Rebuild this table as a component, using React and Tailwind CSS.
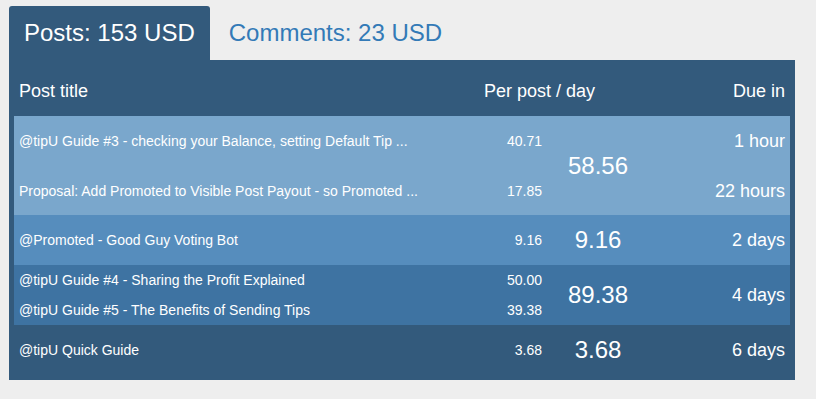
const groups = [
  {
    bg: 'bg-[#7aa7cc]',
    total: '58.56',
    posts: [
      { title: '@tipU Guide #3 - checking your Balance, setting Default Tip ...', value: '40.71', due: '1 hour', h: 'h-[50px]' },
      { title: 'Proposal: Add Promoted to Visible Post Payout - so Promoted ...', value: '17.85', due: '22 hours', h: 'h-[49px]' },
    ],
  },
  {
    bg: 'bg-[#568dbd]',
    total: '9.16',
    due: '2 days',
    posts: [{ title: '@Promoted - Good Guy Voting Bot', value: '9.16', h: 'h-[50px]' }],
  },
  {
    bg: 'bg-[#3e73a2]',
    total: '89.38',
    due: '4 days',
    posts: [
      { title: '@tipU Guide #4 - Sharing the Profit Explained', value: '50.00', h: 'h-[30px]' },
      { title: '@tipU Guide #5 - The Benefits of Sending Tips', value: '39.38', h: 'h-[30px]' },
    ],
  },
  {
    bg: 'bg-[#335a7c]',
    total: '3.68',
    due: '6 days',
    posts: [{ title: '@tipU Quick Guide', value: '3.68', h: 'h-[50px]' }],
  },
];

function Group({ g }) {
  return (
    <div className={`flex ${g.bg}`}>
      <div className="flex-1 flex flex-col">
        {g.posts.map((p, i) => (
          <div key={i} className={`flex items-center ${p.h}`}>
            <div className="flex-1 pl-[5px] text-[14px] leading-[20px] whitespace-nowrap overflow-hidden">{p.title}</div>
            <div className="w-[80px] pr-[5px] text-right text-[14px] leading-[20px]">{p.value}</div>
          </div>
        ))}
      </div>
      <div className="w-[102px] flex items-center justify-center text-[24px] leading-[28px]">{g.total}</div>
      <div className="w-[141px] flex flex-col pr-[5px]">
        {g.due ? (
          <div className="flex-1 flex items-center justify-end text-[18px] leading-[22px]">{g.due}</div>
        ) : (
          g.posts.map((p, i) => (
            <div key={i} className={`flex items-center justify-end text-[18px] leading-[22px] ${p.h}`}>{p.due}</div>
          ))
        )}
      </div>
    </div>
  );
}

export default function App() {
  return (
    <div className="min-h-[399px] bg-[#eeeeee] pt-[6px] pl-[9px] font-['Liberation_Sans',Arial,sans-serif]">
      <div className="w-[786px]">
        <div className="flex items-end">
          <div className="bg-[#335a7c] text-white rounded-t-[3px] px-[15px] py-[13px] text-[24px] leading-[28px]">Posts: 153 USD</div>
          <div className="ml-[4px] px-[15px] py-[13px] text-[24px] leading-[28px] text-[#337ab7]">Comments: 23 USD</div>
        </div>
        <div className="bg-[#335a7c] text-white px-[5px] pb-[5px]">
          <div className="flex h-[56px] pt-[21px] text-[18px] leading-[20px]">
            <div className="flex-1 pl-[5px]">Post title</div>
            <div className="w-[200px] pr-[54px] text-right">Per post / day</div>
            <div className="w-[141px] pr-[5px] text-right">Due in</div>
          </div>
          {groups.map((g, i) => (
            <Group key={i} g={g} />
          ))}
        </div>
      </div>
    </div>
  );
}
